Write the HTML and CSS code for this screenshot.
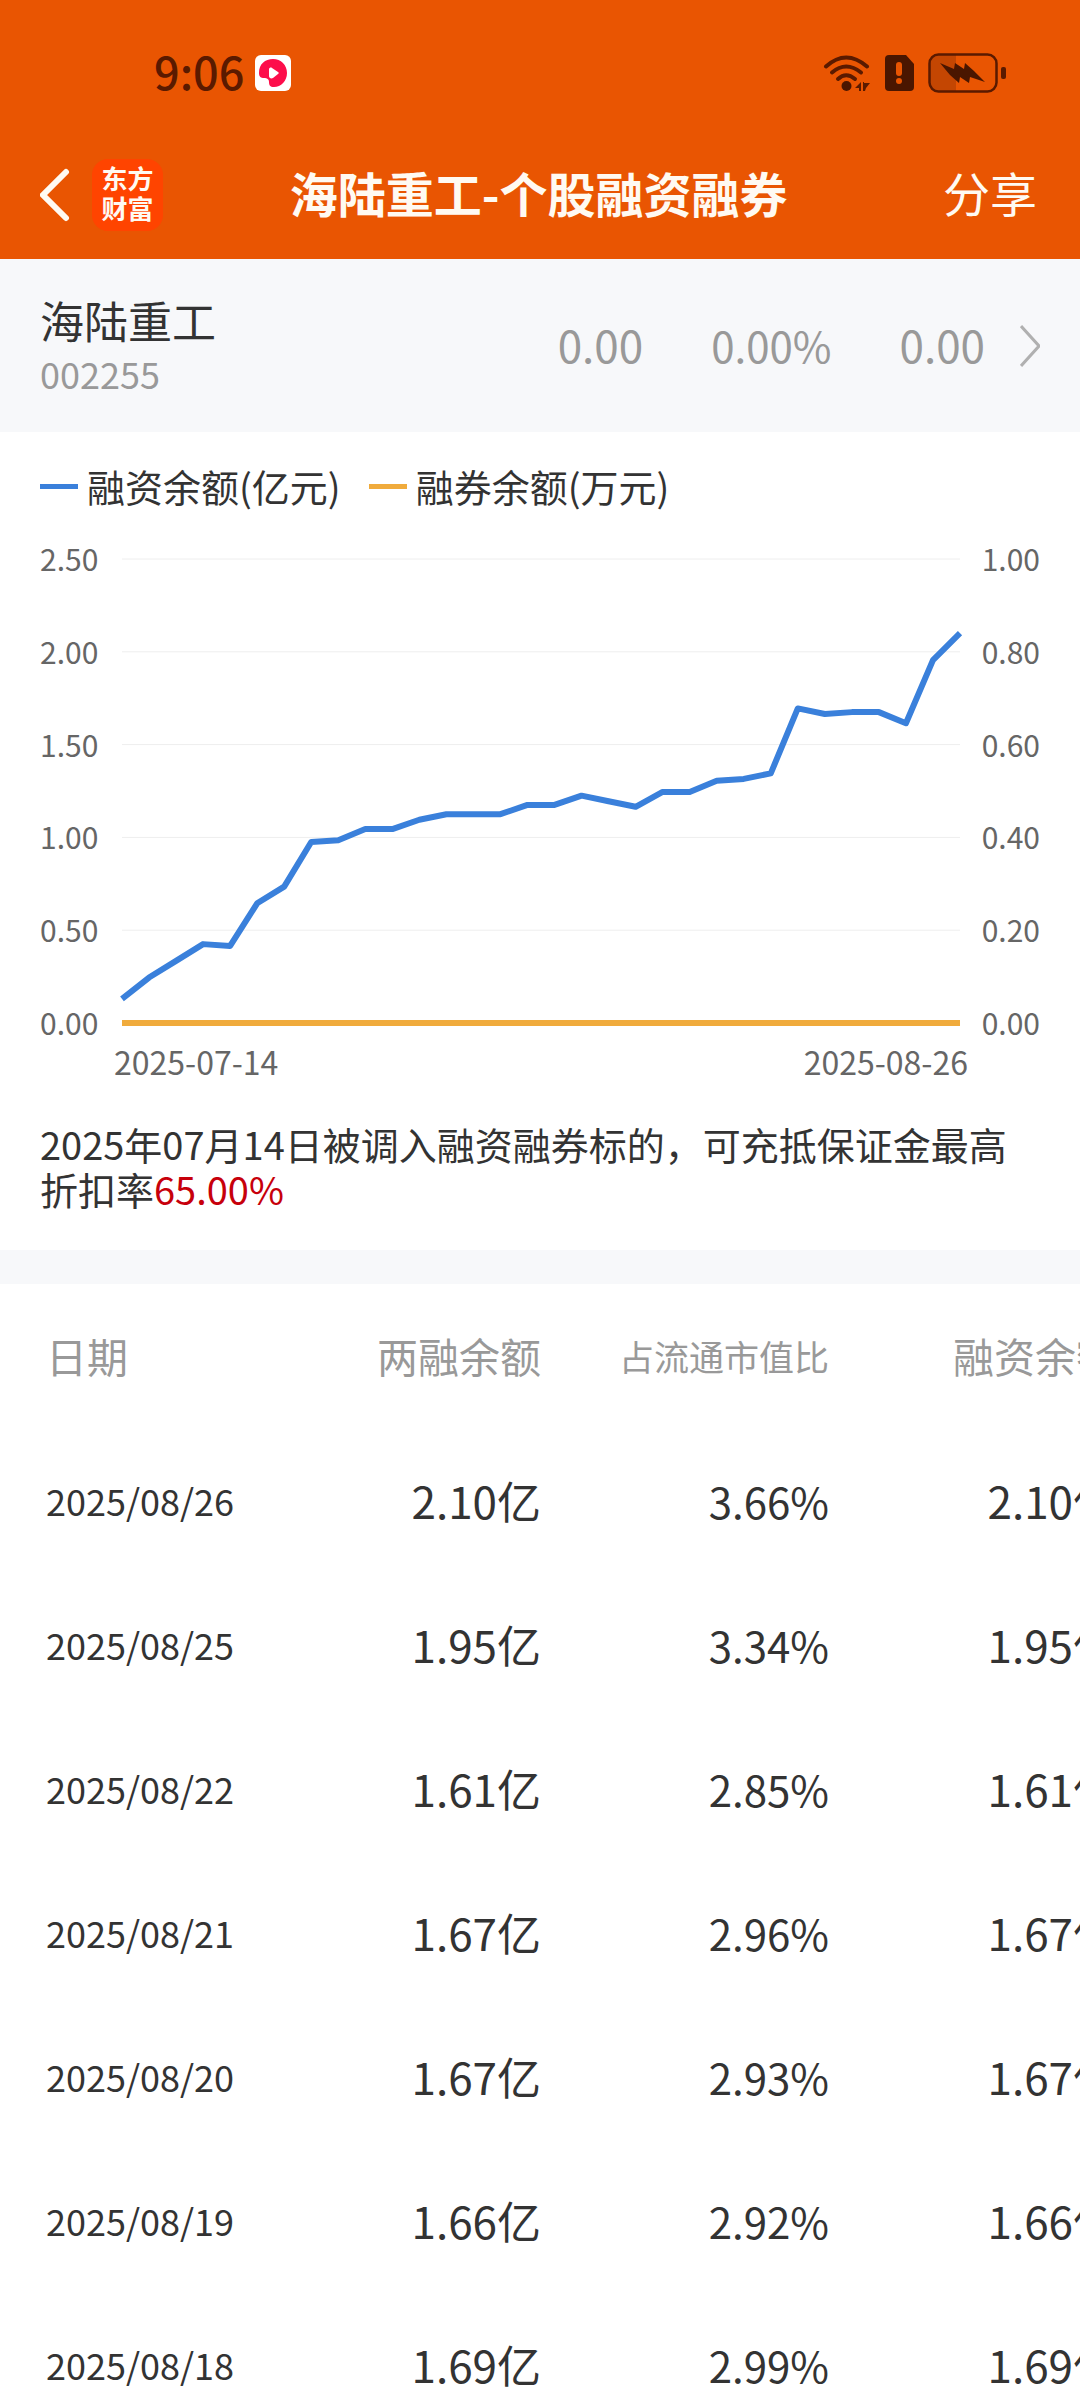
FILE: index.html
```html
<!DOCTYPE html>
<html lang="zh-CN">
<head>
  <meta charset="UTF-8">
  <meta name="viewport" content="width=device-width, initial-scale=1.0">
  <title>海陆重工-个股融资融券</title>
  <link rel="stylesheet" href="styles.css">
</head>
<body>
  <div class="app">
    <header class="header">
      <div class="status-bar">
        <div class="status-left">
          <span class="time">9:06</span>
          <svg class="app-badge" width="36" height="36" viewBox="0 0 36 36">
            <rect width="36" height="36" rx="6" fill="#fff"/>
            <path d="M4 18C4 9 10 4 18 4c8 0 14 6 14 14s-6 14-13 14c-4 0-5-2-5-5 0-3-2-4-5-4-3 0-5-1-5-5z" fill="#fd0d4b"/>
            <path d="M14 14c0-1 2-2 3-1l6 4c1 1 1 1 0 2l-5 4c-2 1-4 0-4-2z" fill="#fff"/>
          </svg>
        </div>
        <div class="status-right">
          <svg width="48" height="38" viewBox="0 0 48 38">
            <g fill="none" stroke="#5a1a00" stroke-width="4" stroke-linecap="round">
              <path d="M3 12.500Q23 -5.500 44 12.500"/>
              <path d="M9 18.500Q23 6.500 38 18.500"/>
              <path d="M15 25Q23 17.500 32 25"/>
            </g>
            <circle cx="23.500" cy="32" r="5" fill="#4a1600"/>
            <path d="M38 28v9h-2v-3h-4zM40 28h1v1h6l-4 5-1 3h-2z" fill="#5a1a00"/>
          </svg>
          <svg width="29" height="36" viewBox="0 0 29 36">
            <path d="M4 0h17l8 9v23q0 4-4 4H4q-4 0-4-4V4q0-4 4-4z" fill="#4a1600"/>
            <rect x="11" y="7" width="6" height="14" rx="3" fill="#e95502"/>
            <circle cx="14" cy="26" r="3" fill="#e95502"/>
          </svg>
          <svg width="78" height="40" viewBox="0 0 78 40">
            <path d="M11 2h17v36H11q-9 0-9-9V11q0-9 9-9z" fill="#c44602"/>
            <rect x="1.500" y="1.500" width="67" height="37" rx="9" fill="none" stroke="#5a1a00" stroke-width="2.500"/>
            <rect x="73" y="14" width="5" height="12" rx="2" fill="#5a1a00"/>
            <path d="M12 10l14 6 1-6 9 6 1-6 9 8 11 11-15-5-1 6-9-6-1 6-9-8z" fill="#4a1600"/>
          </svg>
        </div>
      </div>
      <nav class="nav-bar">
        <div class="nav-side">
          <button class="back" type="button" aria-label="返回">
            <svg width="30" height="54" viewBox="0 0 30 54">
              <path d="M26 4L3 27l23 23" fill="none" stroke="#fffaf2" stroke-width="6" stroke-linecap="round"/>
            </svg>
          </button>
          <a class="logo" href="#">东方<br>财富</a>
        </div>
        <h1>海陆重工-个股融资融券</h1>
        <div class="nav-side nav-end">
          <button class="share" type="button">分享</button>
        </div>
      </nav>
    </header>

    <a class="quote" href="#">
      <div class="stock">
        <div class="stock-name">海陆重工</div>
        <div class="stock-code">002255</div>
      </div>
      <div class="quote-values">
        <span>0.00</span>
        <span class="percent">0.00%</span>
        <span>0.00</span>
      </div>
      <svg class="quote-arrow" width="20" height="42" viewBox="0 0 20 42">
        <path d="M1 1l18 20L1 41" fill="none" stroke="#b0b0b0" stroke-width="3"/>
      </svg>
    </a>

    <section class="chart">
      <div class="legend">
        <span class="legend-item blue">融资余额(亿元)</span>
        <span class="legend-item orange">融券余额(万元)</span>
      </div>
      <div class="chart-body">
        <div class="axis">
          <span>2.50</span><span>2.00</span><span>1.50</span><span>1.00</span><span>0.50</span><span>0.00</span>
        </div>
        <div class="plot">
          <!-- x: 10 per trading day, y: 100 per 1.00 -->
          <svg viewBox="0 0 310 250" preserveAspectRatio="none">
            <path class="grid-line" d="M0 0H310M0 50H310M0 100H310M0 150H310M0 200H310"/>
            <polyline class="line-blue" points="0,237 10,225.500 20,216.500 30,207.500 40,208.500 50,185.500 60,176.500 70,152.500 80,151.500 90,145.500 100,145.500 110,140.500 120,137.500 130,137.500 140,137.500 150,132.500 160,132.500 170,127.500 180,130.500 190,133.500 200,125.500 210,125.500 220,119.500 230,118.500 240,115.500 250,80.500 260,83.500 270,82.500 280,82.500 290,88.500 300,54.500 310,40"/>
            <path class="line-orange" d="M0 250H310"/>
          </svg>
        </div>
        <div class="axis axis-right">
          <span>1.00</span><span>0.80</span><span>0.60</span><span>0.40</span><span>0.20</span><span>0.00</span>
        </div>
      </div>
      <div class="dates">
        <span>2025-07-14</span>
        <span>2025-08-26</span>
      </div>
      <p class="note">2025年07月14日被调入融资融券标的，可充抵保证金最高折扣率<em>65.00%</em></p>
    </section>

    <section class="table-wrap">
      <table>
        <thead>
          <tr><th>日期</th><th>两融余额</th><th class="small">占流通市值比</th><th>融资余额</th></tr>
        </thead>
        <tbody>
          <tr><td>2025/08/26</td><td>2.10亿</td><td class="percent">3.66%</td><td>2.10亿</td></tr>
          <tr><td>2025/08/25</td><td>1.95亿</td><td class="percent">3.34%</td><td>1.95亿</td></tr>
          <tr><td>2025/08/22</td><td>1.61亿</td><td class="percent">2.85%</td><td>1.61亿</td></tr>
          <tr><td>2025/08/21</td><td>1.67亿</td><td class="percent">2.96%</td><td>1.67亿</td></tr>
          <tr><td>2025/08/20</td><td>1.67亿</td><td class="percent">2.93%</td><td>1.67亿</td></tr>
          <tr><td>2025/08/19</td><td>1.66亿</td><td class="percent">2.92%</td><td>1.66亿</td></tr>
          <tr><td>2025/08/18</td><td>1.69亿</td><td class="percent">2.99%</td><td>1.69亿</td></tr>
        </tbody>
      </table>
    </section>
  </div>
</body>
</html>
```

FILE: styles.css
```css
* {
  box-sizing: border-box;
}

body {
  margin: 0;
  background: #fff;
  color: #333;
  font-family: "Noto Sans CJK SC", sans-serif;
}

a {
  color: inherit;
  text-decoration: none;
}

button {
  padding: 0;
  border: none;
  background: none;
  color: inherit;
  font-family: inherit;
  cursor: pointer;
}

svg {
  display: block;
}

.app {
  display: flex;
  flex-direction: column;
  height: 100vh;
  overflow: hidden;
}

/* header */
.header {
  padding-top: 16px;
  background: #e95502;
  color: #fffaf2;
}

.status-bar {
  display: flex;
  justify-content: space-between;
  align-items: center;
  height: 114px;
  padding: 0 74px 0 154px;
}

.status-left,
.status-right {
  display: flex;
  align-items: center;
}

.status-left {
  gap: 11px;
}

.status-right {
  gap: 14px;
}

.time {
  padding-bottom: 4px;
  color: #5a1a00;
  font-size: 45px;
  font-weight: 500;
  line-height: 50px;
}

.nav-bar {
  display: flex;
  justify-content: space-between;
  align-items: center;
  height: 129px;
  padding: 0 43px 0 40px;
}

.nav-side {
  display: flex;
  flex: 1;
  align-items: center;
  gap: 22px;
}

.nav-end {
  justify-content: flex-end;
}

.logo {
  padding: 4px 0 8px;
  width: 71px;
  height: 72px;
  border-radius: 16px;
  background: #ff4400;
  font-size: 26px;
  font-weight: 700;
  line-height: 30px;
  text-align: center;
}

h1 {
  margin: 0;
  padding-bottom: 5px;
  font-size: 48px;
  font-weight: 700;
  line-height: 60px;
}

.share {
  padding-bottom: 5px;
  font-size: 47px;
  line-height: 60px;
}

/* quote */
.quote {
  display: flex;
  align-items: center;
  padding: 34px 40px 33px;
  background: #f7f8fa;
}

.stock {
  flex: 1;
}

.stock-name {
  font-size: 44px;
  line-height: 54px;
}

.stock-code {
  color: #999;
  font-size: 36px;
  line-height: 52px;
}

.quote-values {
  display: flex;
  align-items: baseline;
  gap: 68px;
  margin-right: 35px;
  padding-bottom: 4px;
  color: #999;
  font-size: 44px;
  line-height: 54px;
}

.percent {
  font-size: 42px;
}

/* chart */
.chart {
  padding: 26px 40px 39px;
  border-bottom: 34px solid #f7f8fa;
}

.legend {
  display: flex;
  gap: 28px;
  font-size: 38px;
  line-height: 56px;
}

.legend-item {
  display: flex;
  align-items: center;
  gap: 9px;
}

.legend-item::before {
  content: "";
  width: 38px;
  height: 5px;
}

.blue::before {
  background: #3a80db;
}

.orange::before {
  background: #f0ab3c;
}

.chart-body {
  display: grid;
  grid-template-columns: 82px 1fr 80px;
  margin-top: 29px;
}

.axis {
  display: flex;
  flex-direction: column;
  justify-content: space-between;
  color: #666;
  font-size: 30px;
  line-height: 30px;
}

.axis-right {
  text-align: right;
}

.plot {
  padding: 16px 0 14px;
}

.plot svg {
  width: 100%;
  height: 464px;
  overflow: visible;
}

.plot path,
.plot polyline {
  fill: none;
  vector-effect: non-scaling-stroke;
}

.grid-line {
  stroke: #eee;
  stroke-width: 1px;
}

.line-blue {
  stroke: #3a80db;
  stroke-width: 6px;
  stroke-linejoin: round;
}

.line-orange {
  stroke: #f0ab3c;
  stroke-width: 6px;
}

.dates {
  display: flex;
  justify-content: space-between;
  padding: 4px 72px 0 74px;
  color: #666;
  font-size: 32px;
  line-height: 40px;
}

.note {
  margin: 40px 0 0;
  font-size: 38px;
  line-height: 45px;
}

.note em {
  color: #c7000b;
  font-style: normal;
}

/* table */
.table-wrap {
  flex: 1;
  min-height: 0;
  overflow: auto;
  scrollbar-width: none;
}

table {
  width: 1117px;
  table-layout: fixed;
  border-collapse: collapse;
}

th,
td {
  width: 288px;
  height: 144px;
  padding: 0 0 4px;
  text-align: right;
  white-space: nowrap;
}

th {
  height: 146px;
  color: #999;
  font-size: 41px;
  font-weight: 400;
}

th.small {
  font-size: 35px;
}

td {
  font-size: 44px;
}

td.percent {
  font-size: 42px;
}

th:first-child,
td:first-child {
  width: 253px;
  padding-left: 46px;
  text-align: left;
}

td:first-child {
  font-size: 36px;
}
```
